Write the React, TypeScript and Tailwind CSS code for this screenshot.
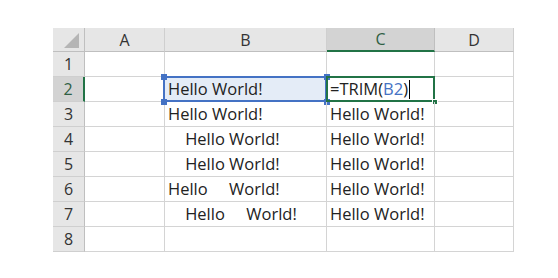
import React from "react";

const cols = ["A", "B", "C", "D"];
const widths = ["w-[80px]", "w-[162px]", "w-[108px]", "w-[79px]"];

const bData: string[] = [
  "",
  "Hello World!",
  "Hello World!",
  "    Hello World!",
  "    Hello World!",
  "Hello     World!",
  "    Hello     World!",
  "",
];

const cData: string[] = [
  "",
  "",
  "Hello World!",
  "Hello World!",
  "Hello World!",
  "Hello World!",
  "Hello World!",
  "",
];

export default function App() {
  return (
    <div
      className="w-[558px] h-[278px] bg-white relative"
      style={{ fontFamily: '"Open Sans", "Liberation Sans", sans-serif' }}
    >
      <div className="absolute left-[53px] top-[28px] flex flex-col">
        {/* header row */}
        <div className="flex h-[24px]">
          <div className="w-[32px] h-[24px] bg-[#e6e6e6] border-r border-b border-[#bfbfbf] relative">
            <div className="absolute right-[5px] bottom-[3px] w-0 h-0 border-l-[15px] border-l-transparent border-b-[15px] border-b-[#b5b5b5]" />
          </div>
          {cols.map((c, i) => (
            <div
              key={c}
              className={`${widths[i]} h-[24px] flex items-center justify-center text-[16px] ${
                c === "C"
                  ? "bg-[#d3d3d3] border-b-2 border-b-[#217346] text-[#2f5f44] border-r border-r-[#bfbfbf]"
                  : "bg-[#e6e6e6] border-b border-b-[#bfbfbf] text-[#333] border-r border-r-[#cfcfcf]"
              }`}
            >
              {c}
            </div>
          ))}
        </div>
        {Array.from({ length: 8 }).map((_, r) => {
          const n = r + 1;
          const sel = n === 2;
          return (
            <div key={n} className="flex h-[25px]">
              <div
                className={`w-[32px] h-[25px] flex items-center justify-center text-[16px] border-b border-b-[#cfcfcf] ${
                  sel
                    ? "bg-[#d3d3d3] border-r-2 border-r-[#217346] text-[#2f5f44]"
                    : "bg-[#e6e6e6] border-r border-r-[#bfbfbf] text-[#333]"
                }`}
              >
                {n}
              </div>
              <div className="w-[80px] h-[25px] border-r border-b border-[#d4d4d4]" />
              <div
                className={`w-[162px] h-[25px] border-r border-b border-[#d4d4d4] flex items-center pl-[3px] text-[16.5px] text-[#222] whitespace-pre relative ${
                  sel ? "bg-[#e4ecf7]" : ""
                }`}
              >
                {bData[r]}
                {sel && (
                  <>
                    <div className="absolute left-[-2px] top-[-1px] w-[164px] h-[26px] border-2 border-[#4472c4]" />
                    <div className="absolute left-[-4px] top-[-3px] w-[6px] h-[6px] bg-[#4472c4]" />
                    <div className="absolute left-[-4px] bottom-[-4px] w-[6px] h-[6px] bg-[#4472c4]" />
                    <div className="absolute right-[-4px] top-[-3px] w-[6px] h-[6px] bg-[#4472c4]" />
                    <div className="absolute right-[-4px] bottom-[-4px] w-[6px] h-[6px] bg-[#4472c4]" />
                  </>
                )}
              </div>
              <div className="w-[108px] h-[25px] border-r border-b border-[#d4d4d4] flex items-center pl-[3px] text-[16.5px] text-[#222] whitespace-pre relative">
                {sel ? (
                  <>
                    <span>=TRIM(</span>
                    <span className="text-[#4472c4]">B2</span>
                    <span>)</span>
                    <span className="inline-block w-[1px] h-[19px] bg-black ml-[1px]" />
                    <div className="absolute left-[-1px] top-[-1px] w-[109px] h-[26px] border-2 border-[#217346]" />
                    <div className="absolute right-[-4px] bottom-[-4px] w-[6px] h-[6px] bg-[#217346] border border-white" />
                  </>
                ) : (
                  cData[r]
                )}
              </div>
              <div className="w-[79px] h-[25px] border-r border-b border-[#d4d4d4]" />
            </div>
          );
        })}
      </div>
    </div>
  );
}
